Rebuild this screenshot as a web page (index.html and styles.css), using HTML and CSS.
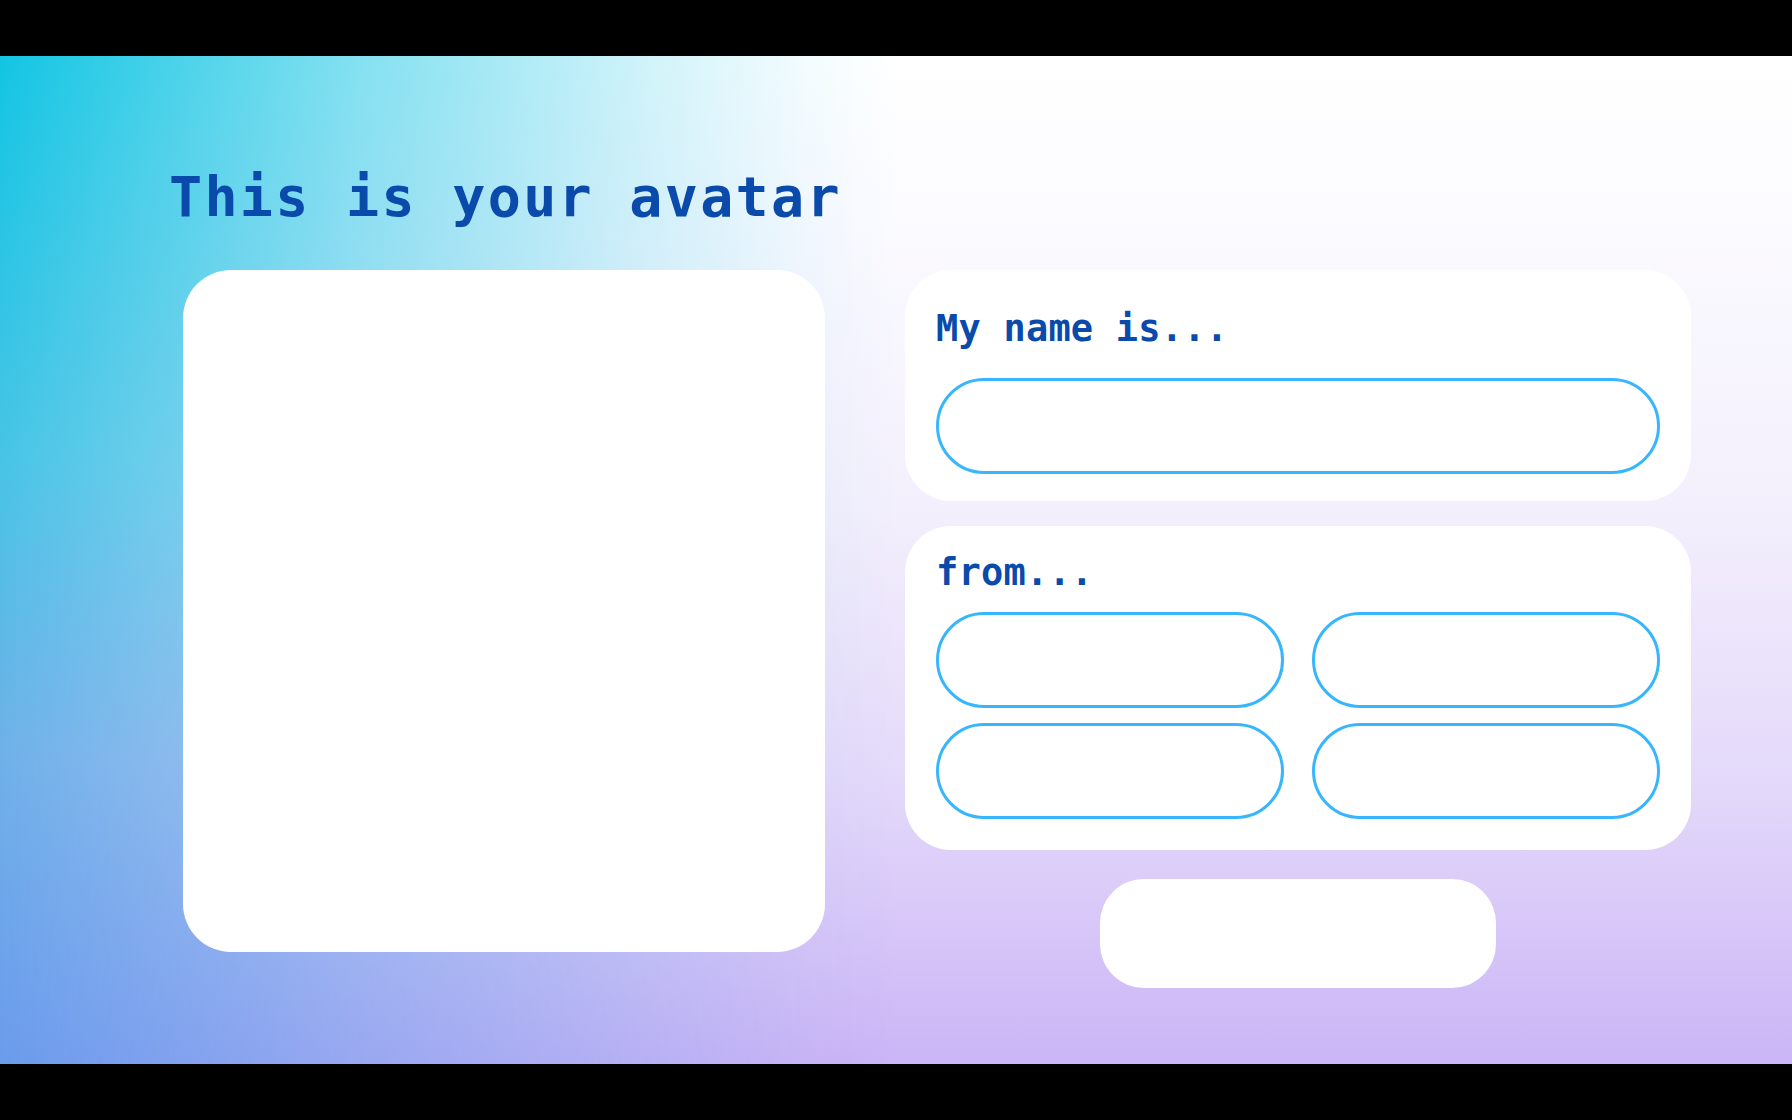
FILE: index.html
```html
<!DOCTYPE html>
<html lang="en">
<head>
<meta charset="utf-8">
<title>This is your avatar</title>
<link rel="stylesheet" href="styles.css">
</head>
<body>
<div class="screen">
  <div class="content">
    <h1 class="title">This is your avatar</h1>
    <div class="main">
      <div class="avatar"></div>
      <div class="side">
        <section class="card card-name">
          <h2 class="label label-name">My name is...</h2>
          <div class="pill pill-wide"></div>
        </section>
        <section class="card card-from">
          <h2 class="label label-from">from...</h2>
          <div class="choices">
            <div class="pill"></div>
            <div class="pill"></div>
            <div class="pill"></div>
            <div class="pill"></div>
          </div>
        </section>
        <div class="action"></div>
      </div>
    </div>
  </div>
</div>
</body>
</html>
```

FILE: styles.css
```css
html, body {
  margin: 0;
  padding: 0;
  background: #000;
}

.screen {
  margin-top: 56px;
  height: 1008px;
  position: relative;
  overflow: hidden;
  background: linear-gradient(to bottom, #ffffff 0%, #fbfaff 18%, #f3effc 45%, #e4d9fa 72%, #cbb5f6 100%);
}

.screen::before {
  content: "";
  position: absolute;
  inset: 0;
  background: linear-gradient(to bottom, #12c5e3 0%, #47c4e6 40%, #6fb0e9 70%, #6a9bec 100%);
  -webkit-mask-image: linear-gradient(to right, rgba(0,0,0,1) 0%, rgba(0,0,0,0.52) 20%, rgba(0,0,0,0.2) 36%, rgba(0,0,0,0.05) 45%, rgba(0,0,0,0) 50%);
  mask-image: linear-gradient(to right, rgba(0,0,0,1) 0%, rgba(0,0,0,0.52) 20%, rgba(0,0,0,0.2) 36%, rgba(0,0,0,0.05) 45%, rgba(0,0,0,0) 50%);
}

.content {
  position: relative;
  z-index: 1;
  padding-top: 109px;
}

.title {
  margin: 0 0 0 169px;
  font-family: "DejaVu Sans Mono", "Liberation Mono", monospace;
  font-weight: bold;
  font-size: 55px;
  line-height: 64px;
  letter-spacing: 2.3px;
  color: #0a4aab;
}

.main {
  display: flex;
  align-items: flex-start;
  gap: 80px;
  margin: 41px 0 0 183px;
}

.avatar {
  width: 642px;
  height: 682px;
  background: #fff;
  border-radius: 48px;
}

.side {
  width: 786px;
  display: flex;
  flex-direction: column;
  align-items: stretch;
}

.card {
  background: #fff;
  border-radius: 46px;
  padding: 0 31px;
  box-sizing: border-box;
}

.card-name {
  padding-top: 37px;
  padding-bottom: 27px;
}

.card-from {
  margin-top: 25px;
  padding-top: 25px;
  padding-bottom: 31px;
}

.label {
  margin: 0;
  font-family: "DejaVu Sans Mono", "Liberation Mono", monospace;
  font-weight: bold;
  font-size: 37px;
  line-height: 43px;
  letter-spacing: 0.2px;
  color: #0a4aab;
}

.label-name {
  margin-bottom: 28px;
}

.label-from {
  margin-bottom: 18px;
}

.pill {
  height: 96px;
  box-sizing: border-box;
  border: 3px solid #38b6fd;
  border-radius: 48px;
  background: #fff;
}

.choices {
  display: grid;
  grid-template-columns: 1fr 1fr;
  column-gap: 28px;
  row-gap: 15px;
}

.action {
  align-self: center;
  width: 396px;
  height: 109px;
  margin-top: 29px;
  background: #fff;
  border-radius: 44px;
}
```
